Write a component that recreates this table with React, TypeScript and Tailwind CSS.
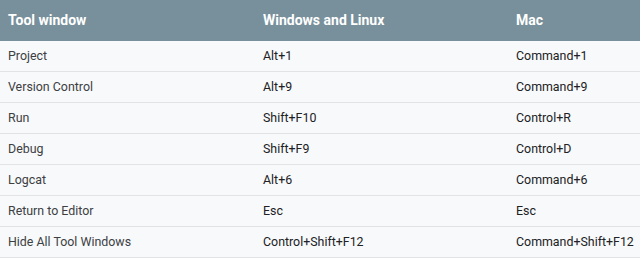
const rows = [
  ["Project", "Alt+1", "Command+1"],
  ["Version Control", "Alt+9", "Command+9"],
  ["Run", "Shift+F10", "Control+R"],
  ["Debug", "Shift+F9", "Control+D"],
  ["Logcat", "Alt+6", "Command+6"],
  ["Return to Editor", "Esc", "Esc"],
  ["Hide All Tool Windows", "Control+Shift+F12", "Command+Shift+F12"],
];

export default function App() {
  return (
    <div className="w-[640px] h-[258px] overflow-hidden bg-[#f8f9fa] font-['Roboto',sans-serif] text-[12.4px]">
      <div className="grid grid-cols-[255px_253px_1fr] h-[41px] items-center bg-[#78909c] text-white font-bold text-[14px]">
        <div className="pl-2">Tool window</div>
        <div className="pl-2">Windows and Linux</div>
        <div className="pl-2">Mac</div>
      </div>
      {rows.map((r) => (
        <div key={r[0]} className="grid grid-cols-[255px_253px_1fr] h-[31px] items-center border-b border-[#e1e3e5]">
          <div className="pl-2 text-[#3c4043]">{r[0]}</div>
          <div className="pl-2 text-[#202124]">{r[1]}</div>
          <div className="pl-2 text-[#202124]">{r[2]}</div>
        </div>
      ))}
    </div>
  );
}
